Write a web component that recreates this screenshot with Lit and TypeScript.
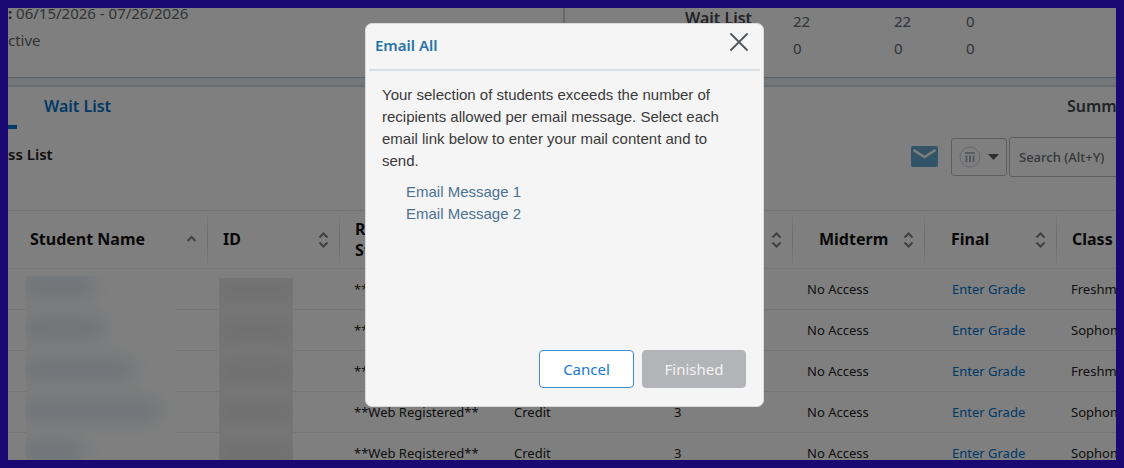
import { LitElement, html, css, svg, nothing } from "lit";
import { customElement, property } from "lit/decorators.js";

interface Column {
  key: string;
  label: string;
  sort: "asc" | "both" | "none";
}

interface Student {
  nameWidth: number;
  status: string;
  mode: string;
  credits: string;
  midterm: string;
  final: string;
  level: string;
}

const COLUMNS: Column[] = [
  { key: "name", label: "Student Name", sort: "asc" },
  { key: "id", label: "ID", sort: "both" },
  { key: "status", label: "Registration Status", sort: "both" },
  { key: "mode", label: "", sort: "none" },
  { key: "credits", label: "", sort: "both" },
  { key: "midterm", label: "Midterm", sort: "both" },
  { key: "final", label: "Final", sort: "both" },
  { key: "level", label: "Class", sort: "none" },
];

const row = (nameWidth: number, level: string): Student => ({
  nameWidth,
  status: "**Web Registered**",
  mode: "Credit",
  credits: "3",
  midterm: "No Access",
  final: "Enter Grade",
  level,
});

const STUDENTS: Student[] = [
  row(74, "Freshman"),
  row(84, "Sophomore"),
  row(114, "Freshman"),
  row(140, "Sophomore"),
  row(64, "Sophomore"),
];

@customElement("sort-mark")
class SortMark extends LitElement {
  @property() kind = "both";

  static styles = css`
    :host {
      display: block;
      line-height: 0;
    }
  `;

  render() {
    const path =
      this.kind === "asc"
        ? svg`<path d="M1.5 9 5.5 5 9.500 9" />`
        : svg`<path d="M1.500 5.500 5.500 1.500 9.500 5.500M1.500 10.500 5.500 14.500 9.500 10.500" />`;
    return html`<svg width="11" height="16" viewBox="0 0 11 16" fill="none" stroke="#7c8086" stroke-width="2" aria-hidden="true">${path}</svg>`;
  }
}

@customElement("class-list")
class ClassList extends LitElement {
  static styles = css`
    :host {
      display: block;
      position: relative;
    }
    table {
      width: 100%;
      table-layout: fixed;
      border-collapse: separate;
      border-spacing: 0;
      font-size: 13px;
      color: #222;
    }
    th,
    td {
      box-sizing: border-box;
      padding: 0 14px;
      text-align: left;
      border-bottom: 1px solid #e8eaec;
      white-space: nowrap;
    }
    th {
      height: 59px;
      padding: 0 15px;
      border-top: 1px solid #e4e6e8;
      font-size: 16px;
      line-height: 21px;
      font-weight: 700;
      color: #111;
      background: linear-gradient(#fff, #d0d2d5, #fff) right / 1px 100% no-repeat;
    }
    td {
      height: 41px;
    }
    .id,
    .midterm,
    .final,
    .level {
      width: 132px;
    }
    .credits {
      width: 133px;
    }
    .status,
    .mode {
      width: 160px;
    }
    th.name {
      padding-left: 22px;
    }
    th.midterm,
    th.final {
      padding-left: 26px;
    }
    td.final {
      padding-left: 27px;
    }
    th.status {
      white-space: normal;
    }
    .head {
      display: flex;
      align-items: center;
      justify-content: space-between;
    }
    .head sort-mark {
      margin-right: -4px;
    }
    a {
      color: #0072ce;
      text-decoration: none;
    }
    .mask {
      position: absolute;
      overflow: hidden;
      bottom: 0;
      box-sizing: border-box;
      background: #fefefe;
    }
    .names {
      left: 18px;
      top: 66px;
      width: 149px;
    }
    .ids {
      left: 211px;
      top: 68px;
      width: 74px;
      background: #f0f0f0;
    }
    .blob {
      height: 22px;
      margin: 0 0 19px -6px;
      border-radius: 8px;
      background: #dfe8f1;
      filter: blur(9px);
    }
    .ids .blob {
      width: 86px;
      background: #dfdfdf;
    }
  `;

  render() {
    return html`
      <table>
        <thead>
          <tr>
            ${COLUMNS.map(
              (c) => html`<th class=${c.key} scope="col">
                <div class="head">
                  <span>${c.label}</span>
                  ${c.sort === "none" ? nothing : html`<sort-mark kind=${c.sort}></sort-mark>`}
                </div>
              </th>`
            )}
          </tr>
        </thead>
        <tbody>
          ${STUDENTS.map(
            (s) => html`<tr>
              <td class="name"></td>
              <td class="id"></td>
              <td class="status">${s.status}</td>
              <td class="mode">${s.mode}</td>
              <td class="credits">${s.credits}</td>
              <td class="midterm">${s.midterm}</td>
              <td class="final"><a href="#grade">${s.final}</a></td>
              <td class="level">${s.level}</td>
            </tr>`
          )}
        </tbody>
      </table>
      <div class="mask names" aria-hidden="true">
        ${STUDENTS.map((s) => html`<div class="blob" style="width:${s.nameWidth}px"></div>`)}
      </div>
      <div class="mask ids" aria-hidden="true">
        ${STUDENTS.map(() => html`<div class="blob"></div>`)}
      </div>
    `;
  }
}

@customElement("email-dialog")
class EmailDialog extends LitElement {
  static styles = css`
    :host {
      display: block;
      width: 399px;
      max-width: 100%;
    }
    .dialog {
      display: flex;
      flex-direction: column;
      box-sizing: border-box;
      min-height: 384px;
      border: 1px solid #d9d9d9;
      border-radius: 7px;
      background: #f5f5f5;
      color: #3a3a3a;
    }
    header {
      display: flex;
      align-items: flex-start;
      justify-content: space-between;
      height: 45px;
      margin: 0 3px;
      padding: 0 12px 0 6px;
      border-bottom: 2px solid #d9dee3;
    }
    h2 {
      margin: 0;
      font-size: 15px;
      line-height: 42px;
      font-weight: 600;
      color: #2874a6;
    }
    .close {
      position: relative;
      width: 18px;
      height: 18px;
      padding: 0;
      border: 0;
      margin-top: 9px;
      background: none;
      cursor: pointer;
    }
    .close span {
      position: absolute;
      left: 0;
      top: 0;
      font: 9px/12px "Noto Sans", sans-serif;
      color: #fff;
    }
    .close svg {
      position: relative;
      display: block;
    }
    .body {
      flex: 1;
      padding: 13px 24px 0 16px;
      font: 15px/22px "Liberation Sans", Arial, sans-serif;
    }
    p {
      margin: 0;
    }
    ul {
      margin: 9px 0 0;
      padding: 0 0 0 24px;
      list-style: none;
    }
    .body a {
      color: #4c7291;
      text-decoration: none;
    }
    footer {
      display: flex;
      justify-content: flex-end;
      gap: 8px;
      padding: 0 17px 18px;
    }
    footer button {
      box-sizing: border-box;
      height: 38px;
      padding: 0;
      border-radius: 4px;
      font: 15px/20px "Noto Sans", sans-serif;
    }
    .cancel {
      width: 95px;
      border: 1px solid #3d8fd6;
      background: #fff;
      color: #1a78cf;
    }
    .finished {
      width: 104px;
      border: 1px solid #b2b4b8;
      background: #b2b4b8;
      color: #f3f3f4;
    }
  `;

  render() {
    return html`
      <div class="dialog" role="dialog" aria-modal="true" aria-labelledby="title">
        <header>
          <h2 id="title">Email All</h2>
          <button class="close" type="button">
            <span>Close</span>
            <svg width="18" height="18" viewBox="0 0 18 18" fill="none" stroke="#4f565d" stroke-width="1.8" stroke-linecap="round" aria-hidden="true">
              <path d="M1 1 17 17M17 1 1 17" />
            </svg>
          </button>
        </header>
        <div class="body">
          <p>
            Your selection of students exceeds the number of recipients allowed per email message. Select each email
            link below to enter your mail content and to send.
          </p>
          <ul>
            <li><a href="#message-1">Email Message 1</a></li>
            <li><a href="#message-2">Email Message 2</a></li>
          </ul>
        </div>
        <footer>
          <button class="cancel" type="button">Cancel</button>
          <button class="finished" type="button" disabled>Finished</button>
        </footer>
      </div>
    `;
  }
}

@customElement("app-root")
class AppRoot extends LitElement {
  static styles = css`
    :host {
      display: block;
      font-family: "Noto Sans", "Open Sans", sans-serif;
    }
    .frame {
      position: relative;
      box-sizing: border-box;
      height: 100vh;
      overflow: hidden;
      border: 8px solid #1a0873;
      background: #fff;
    }
    .page {
      width: calc(100% + 73px);
    }
    .summary {
      display: flex;
      box-sizing: border-box;
      height: 70px;
      border-bottom: 1px solid #b9c0c6;
      font-size: 15px;
      line-height: 27px;
      color: #63686d;
      overflow: hidden;
    }
    .dates {
      box-sizing: border-box;
      width: 557px;
      margin-top: -8px;
      border-right: 2px solid #ccd5dc;
    }
    .dates b {
      color: #44484c;
    }
    .counts {
      margin-left: 120px;
      border-collapse: collapse;
      align-self: flex-start;
    }
    .counts th,
    .counts td {
      padding: 0;
      height: 27px;
      text-align: left;
    }
    .counts th {
      width: 108px;
      padding-bottom: 6px;
      height: 21px;
      font-size: 16px;
      line-height: 21px;
      font-weight: 600;
      color: #44484c;
    }
    .counts .wide {
      width: 101px;
    }
    .counts .mid {
      width: 72px;
    }
    .band {
      height: 7px;
      border-bottom: 2px solid #d2dade;
      background: #e6eef4;
    }
    .tabs {
      display: flex;
      justify-content: space-between;
      height: 42px;
      font-size: 16px;
      line-height: 39px;
      font-weight: 600;
    }
    .left {
      display: flex;
      gap: 27px;
    }
    .current {
      align-self: flex-end;
      width: 9px;
      height: 4px;
      background: #0072ce;
    }
    .tabs a {
      color: #0072ce;
      text-decoration: none;
    }
    .tabs .view {
      width: 122px;
      color: #44484c;
    }
    .toolbar {
      display: flex;
      align-items: flex-start;
      height: 81px;
      padding-right: 10px;
    }
    h1 {
      flex: 1;
      margin: 0;
      font-size: 15px;
      line-height: 50px;
      font-weight: 600;
      color: #222;
    }
    button {
      padding: 0;
      border: 0;
      background: none;
    }
    .mail {
      display: block;
      margin: 17px 13px 0 0;
      line-height: 0;
    }
    .layout {
      box-sizing: border-box;
      display: flex;
      align-items: center;
      justify-content: space-between;
      width: 56px;
      height: 38px;
      margin: 9px 2px 0 0;
      padding: 0 7px;
      border: 1px solid #bbb;
      border-radius: 3px;
    }
    input {
      box-sizing: border-box;
      width: 170px;
      height: 40px;
      margin: 8px 0 0;
      padding: 0 9px;
      border: 1px solid #bbb;
      border-radius: 3px;
      background: #fff;
      font: 500 13px/20px "Noto Sans", sans-serif;
    }
    input::placeholder {
      color: #6d7074;
      opacity: 1;
    }
    .backdrop {
      position: absolute;
      inset: 0;
      display: flex;
      justify-content: center;
      align-items: flex-start;
      padding: 15px 0 0 5px;
      background: rgba(0, 0, 0, 0.5);
    }
  `;

  render() {
    return html`
      <div class="frame">
        <div class="page">
          <section class="summary">
            <div class="dates">
              <div><b>:</b> 06/15/2026 - 07/26/2026</div>
              <div>ctive</div>
            </div>
            <table class="counts">
              <tr>
                <th scope="row">Wait List</th>
                <td class="wide">22</td>
                <td class="mid">22</td>
                <td>0</td>
              </tr>
              <tr>
                <th></th>
                <td>0</td>
                <td>0</td>
                <td>0</td>
              </tr>
            </table>
          </section>
          <div class="band"></div>
          <nav class="tabs">
            <div class="left">
              <div class="current"></div>
              <a href="#wait-list">Wait List</a>
            </div>
            <div class="view">Summary</div>
          </nav>
          <div class="toolbar">
            <h1>ss List</h1>
            <button class="mail" type="button" aria-label="Send email">
              <svg width="27" height="21" viewBox="0 0 27 21" aria-hidden="true">
                <rect width="27" height="21" rx="2" fill="#66a8d0" />
                <path d="M2.500 4 13.500 11 24.500 4" fill="none" stroke="#fff" stroke-width="2.400" />
              </svg>
            </button>
            <button class="layout" type="button" aria-label="Column layout">
              <svg width="22" height="22" viewBox="0 0 22 22" fill="none" aria-hidden="true">
                <circle cx="11" cy="11" r="10" stroke="#ccd3d9" />
                <path d="M6 7H16" stroke="#a0a9b2" stroke-width="1.600" />
                <path d="M7.500 9.500V16M11 9.500V16M14.500 9.500V16" stroke="#a0a9b2" stroke-width="1.800" />
              </svg>
              <svg width="11" height="6" viewBox="0 0 11 6" aria-hidden="true"><path d="M0 0H11L5.500 6Z" fill="#5a5d62" /></svg>
            </button>
            <input type="text" aria-label="Search" placeholder="Search (Alt+Y)" />
          </div>
          <class-list></class-list>
        </div>
        <div class="backdrop"><email-dialog></email-dialog></div>
      </div>
    `;
  }
}
